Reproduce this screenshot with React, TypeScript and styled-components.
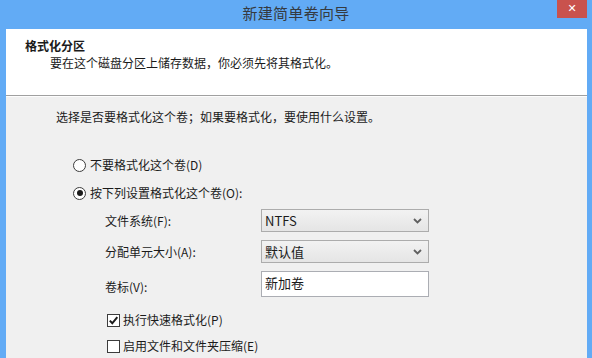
import styled, { createGlobalStyle } from 'styled-components';

const GlobalStyle = createGlobalStyle`
    html, body {
        margin: 0;
        padding: 0;
        background: #62abf5;
    }
    body {
        font-family: "Noto Sans CJK SC", "Noto Sans", sans-serif;
        font-size: 12px;
        color: #1b1b1b;
    }
`;

const Chevron = () => (
    <svg width="9" height="6" viewBox="0 0 9 6">
        <path d="M1 1 L4.5 4.5 L8 1" fill="none" stroke="#606060" strokeWidth="1.8" />
    </svg>
);

const CheckMark = () => (
    <svg width="11" height="11" viewBox="0 0 11 11">
        <path d="M1.8 5.6 L4.3 8.3 L9.3 2.2" fill="none" stroke="#1b1b1b" strokeWidth="2" />
    </svg>
);

type SelectProps = { value: string };

function FakeSelect({ value }: SelectProps) {
    return (
        <Select>
            <span>{value}</span>
            <Chevron />
        </Select>
    );
}

export default function App() {
    return (
        <Window>
            <GlobalStyle />
            <TitleBar>
                <span />
                <Title>新建简单卷向导</Title>
                <CloseButton>✕</CloseButton>
            </TitleBar>
            <Frame>
                <Header>
                    <HeaderTitle>格式化分区</HeaderTitle>
                    <HeaderText>要在这个磁盘分区上储存数据，你必须先将其格式化。</HeaderText>
                </Header>
                <Body>
                    <Intro>选择是否要格式化这个卷；如果要格式化，要使用什么设置。</Intro>
                    <OptionRow>
                        <Radio checked={false} />
                        <span>不要格式化这个卷(D)</span>
                    </OptionRow>
                    <OptionRow>
                        <Radio checked={true} />
                        <span>按下列设置格式化这个卷(O):</span>
                    </OptionRow>
                    <Form>
                        <Label>文件系统(F):</Label>
                        <FakeSelect value="NTFS" />
                        <Label>分配单元大小(A):</Label>
                        <FakeSelect value="默认值" />
                        <Label $offset={3}>卷标(V):</Label>
                        <TextBox>新加卷</TextBox>
                    </Form>
                    <CheckRow $top={15}>
                        <CheckBox>
                            <CheckMark />
                        </CheckBox>
                        <span>执行快速格式化(P)</span>
                    </CheckRow>
                    <CheckRow $top={10}>
                        <CheckBox />
                        <span>启用文件和文件夹压缩(E)</span>
                    </CheckRow>
                </Body>
            </Frame>
        </Window>
    );
}

const Window = styled.div`
    width: 592px;
    height: 358px;
    overflow: hidden;
    background: #62abf5;
    display: flex;
    flex-direction: column;
`;

const TitleBar = styled.div`
    height: 29px;
    flex: none;
    display: grid;
    grid-template-columns: 1fr auto 1fr;
    align-items: start;
`;

const Title = styled.div`
    font-size: 15px;
    line-height: 25px;
    color: #353a40;
    letter-spacing: 0.3px;
`;

const CloseButton = styled.div`
    justify-self: end;
    width: 30px;
    height: 18px;
    margin-right: 5px;
    background: #c9524d;
    color: #fff;
    font-family: "DejaVu Sans", sans-serif;
    font-size: 11px;
    font-weight: bold;
    line-height: 18px;
    text-align: center;
`;

const Frame = styled.div`
    flex: 1;
    margin: 0 5px 0 6px;
    background: #f0f0f0;
    display: flex;
    flex-direction: column;
`;

const Header = styled.div`
    height: 67px;
    flex: none;
    background: #fff;
    border-bottom: 1px solid #a0a0a0;
    box-shadow: 0 1px 0 #fdfdfd;
    padding: 8px 0 0 19px;
    box-sizing: border-box;
`;

const HeaderTitle = styled.div`
    font-weight: bold;
    line-height: 17px;
`;

const HeaderText = styled.div`
    line-height: 17px;
    padding-left: 25px;
`;

const Body = styled.div`
    padding: 13px 0 0 50px;
`;

const Intro = styled.div`
    line-height: 16px;
    margin-bottom: 32px;
`;

const OptionRow = styled.div`
    display: flex;
    align-items: center;
    gap: 4px;
    height: 16px;
    margin: 0 0 12px 17px;
    line-height: 16px;
`;

const Radio = styled.span<{ checked: boolean }>`
    width: 11px;
    height: 11px;
    border: 1px solid #3c3c3c;
    border-radius: 50%;
    background: #fff;
    display: inline-flex;
    align-items: center;
    justify-content: center;
    &::after {
        content: '';
        width: 6px;
        height: 6px;
        border-radius: 50%;
        background: ${p => (p.checked ? '#1b1b1b' : 'transparent')};
    }
`;

const Form = styled.div`
    display: grid;
    grid-template-columns: 156px 168px;
    row-gap: 8px;
    align-items: center;
    margin: -4px 0 0 49px;
`;

const Label = styled.div<{ $offset?: number }>`
    line-height: 16px;
    padding-top: ${p => (p.$offset ?? 0) * 2}px;
`;

const Select = styled.div`
    height: 23px;
    box-sizing: border-box;
    border: 1px solid #acacac;
    background: linear-gradient(#f2f2f2, #e5e5e5);
    display: flex;
    align-items: center;
    justify-content: space-between;
    padding: 0 6px 0 3px;
    font-size: 13px;
`;

const TextBox = styled.div`
    height: 26px;
    box-sizing: border-box;
    border: 1px solid #abadb3;
    background: #fff;
    padding: 2px 3px;
    font-size: 13px;
    line-height: 18px;
`;

const CheckRow = styled.div<{ $top: number }>`
    display: flex;
    align-items: center;
    gap: 3px;
    height: 16px;
    line-height: 16px;
    margin: ${p => p.$top}px 0 0 51px;
`;

const CheckBox = styled.span`
    width: 11px;
    height: 11px;
    border: 1px solid #3c3c3c;
    background: #fff;
    display: inline-flex;
    align-items: center;
    justify-content: center;
`;
